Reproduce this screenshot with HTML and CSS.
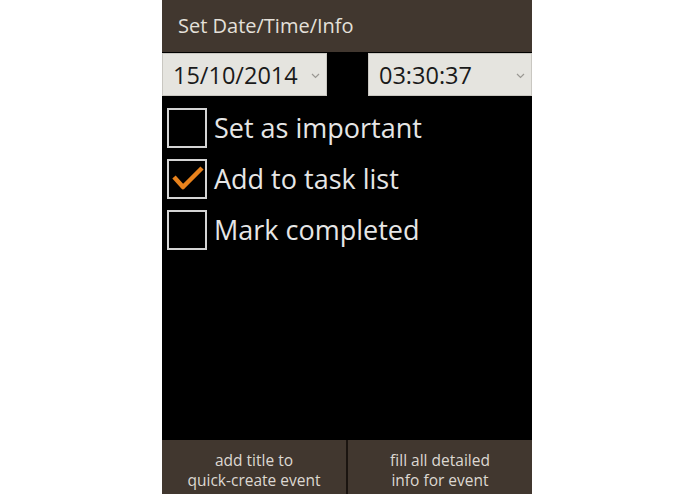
FILE: index.html
```html
<!DOCTYPE html>
<html lang="en">
<head>
    <meta charset="UTF-8">
    <meta name="viewport" content="width=device-width, initial-scale=1.0">
    <title>Set Date/Time/Info</title>
    <link rel="stylesheet" href="styles.css">
</head>
<body>

    <!-- Phone screen -->
    <div class="screen">
        <div class="title-bar">Set Date/Time/Info</div>

        <!-- Date and time pickers -->
        <div class="pickers">
            <div class="picker">
                <span>15/10/2014</span>
                <svg class="chevron" width="9" height="6" viewBox="0 0 9 6"><path d="M1 1 L4.5 4.5 L8 1" fill="none" stroke="#9a9893" stroke-width="1.2"/></svg>
            </div>
            <div class="picker">
                <span>03:30:37</span>
                <svg class="chevron" width="9" height="6" viewBox="0 0 9 6"><path d="M1 1 L4.5 4.5 L8 1" fill="none" stroke="#9a9893" stroke-width="1.2"/></svg>
            </div>
        </div>

        <!-- Options -->
        <div class="options">
            <div class="option">
                <span class="box"></span>
                <span>Set as important</span>
            </div>
            <div class="option">
                <span class="box">
                    <svg width="36" height="36" viewBox="0 0 36 36"><path d="M5 16 L14 26 L33 7" fill="none" stroke="#e8821c" stroke-width="4.5" stroke-linejoin="round"/></svg>
                </span>
                <span>Add to task list</span>
            </div>
            <div class="option">
                <span class="box"></span>
                <span>Mark completed</span>
            </div>
        </div>

        <!-- Bottom actions -->
        <div class="actions">
            <div class="action">add title to<br>quick-create event</div>
            <div class="action">fill all detailed<br>info for event</div>
        </div>
    </div>

</body>
</html>
```

FILE: styles.css
```css
body {
    margin: 0;
    padding: 0;
    background: #ffffff;
    font-family: 'Open Sans', 'DejaVu Sans', sans-serif;
}
.screen {
    width: 370px;
    height: 494px;
    margin-left: 162px;
    background: #000;
    display: flex;
    flex-direction: column;
}
.title-bar {
    height: 52px;
    background: #41372f;
    color: #e4e0da;
    font-size: 20px;
    line-height: 52px;
    padding-left: 16px;
}
.pickers {
    display: flex;
    justify-content: space-between;
    margin-top: 1px;
    height: 43px;
}
.picker {
    width: 165px;
    box-sizing: border-box;
    background: #e5e4df;
    border: 1px solid #c9c7c1;
    display: flex;
    align-items: center;
    justify-content: space-between;
    padding: 0 6px 0 10px;
    color: #1a1a1a;
    font-size: 23.5px;
}
.picker:last-child {
    width: 164px;
}
.chevron {
    margin-top: 2px;
}
.options {
    flex: 1;
    padding: 6px 0 0 5px;
}
.option {
    display: flex;
    align-items: center;
    gap: 7px;
    height: 51px;
    color: #e6e6e6;
    font-size: 27px;
}
.box {
    width: 40px;
    height: 40px;
    box-sizing: border-box;
    border: 2px solid #d4d4d4;
    display: flex;
    align-items: center;
    justify-content: center;
}
.actions {
    height: 54px;
    display: flex;
    background: #41372f;
}
.action {
    flex: 1;
    text-align: center;
    color: #ddd8d2;
    font-size: 15.5px;
    line-height: 20px;
    padding-top: 10px;
}
.action + .action {
    border-left: 2px solid #1a1410;
}
```
